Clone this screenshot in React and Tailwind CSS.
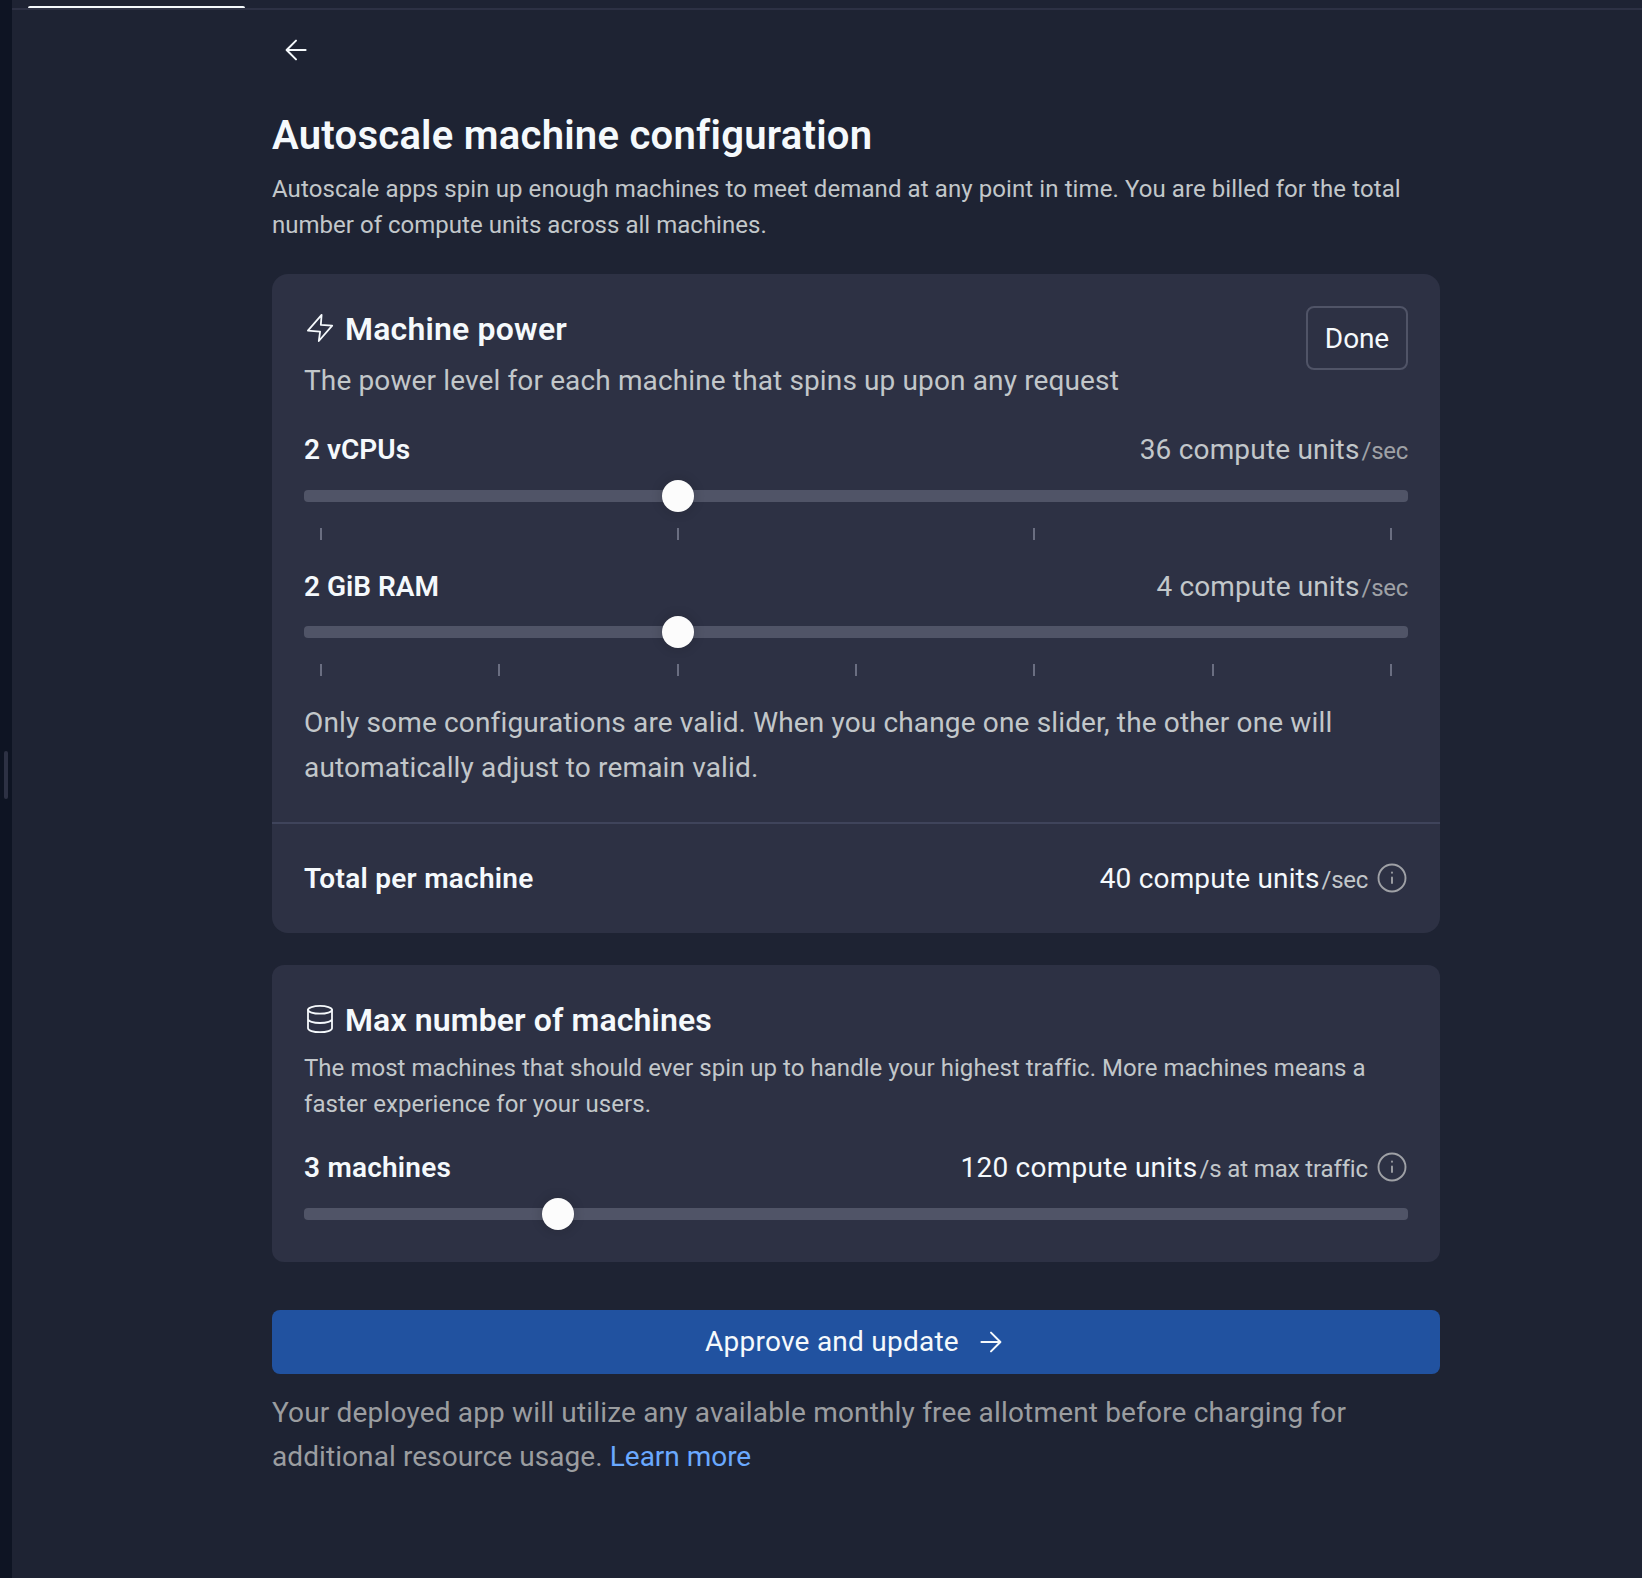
const Arrow = ({ className }) => (
  <svg viewBox="0 0 24 24" className={className} fill="none" stroke="currentColor" strokeWidth="2" strokeLinecap="round" strokeLinejoin="round">
    <path d="M2.4 12h18.6M12 2.6 21.4 12 12 21.4" />
  </svg>
);

const Bolt = () => (
  <svg viewBox="0 0 32 32" className="mb-0.5 size-8 shrink-0" fill="none" stroke="currentColor" strokeWidth="1.8" strokeLinejoin="round">
    <path d="M17.6 2.9 3.9 18.6l12.2 1L14.8 29 28.2 13.7l-11.4-.8z" />
  </svg>
);

const Database = () => (
  <svg viewBox="0 0 32 32" className="mb-0.5 size-8 shrink-0" fill="none" stroke="currentColor" strokeWidth="1.8" strokeLinecap="round">
    <ellipse cx="16" cy="6.8" rx="12" ry="3.9" />
    <path d="M4 6.8v18.4c0 2.2 5.4 4 12 4s12-1.8 12-4V6.8M4 16c0 2.2 5.4 4 12 4s12-1.8 12-4" />
  </svg>
);

const Info = () => (
  <svg viewBox="0 0 32 32" className="ml-2 size-8 shrink-0 text-[#9fa1a6]" fill="none" stroke="currentColor" strokeWidth="1.9" strokeLinecap="round">
    <circle cx="16" cy="16" r="13.5" />
    <path d="M16 15.4v5.6M16 10.5v.3" />
  </svg>
);

function Slider({ percent, ticks = 0 }) {
  return (
    <div>
      <div className="flex h-8 items-center">
        <div className="h-3 w-full rounded bg-[#505467] px-4">
          <div className="relative h-3">
            <div
              className="absolute -top-2.5 size-8 -translate-x-1/2 rounded-full bg-[#fcfcfc] shadow-[0_0_12px_rgba(20,20,20,0.2)]"
              style={{ left: `${percent}%` }}
            />
          </div>
        </div>
      </div>
      {ticks > 0 && (
        <div className="mt-4 flex justify-between px-4">
          {Array.from({ length: ticks }, (_, i) => (
            <div key={i} className="h-3 w-0.5 bg-[#6a6e81]" />
          ))}
        </div>
      )}
    </div>
  );
}

const Row = ({ label, labelClass = "", children }) => (
  <div className="flex h-11 items-center justify-between text-[28px] leading-[44px]">
    <span className={`pt-0.5 font-semibold ${labelClass}`}>{label}</span>
    <div className="flex items-center">{children}</div>
  </div>
);

export default function App() {
  return (
    <div className="flex h-[1578px] w-[1642px] overflow-hidden bg-[#1e2333] font-['Roboto','Liberation_Sans',sans-serif] text-[#f5f9fc]">
      <aside className="flex w-3 shrink-0 bg-[#0e1423]">
        <div className="mt-[751px] ml-1 h-12 w-1 rounded-full bg-[#2d3144]" />
      </aside>
      <div className="flex grow flex-col">
        <header className="flex h-2.5 shrink-0 items-end border-b-2 border-[#2d3144] pl-4">
          <div className="h-0.5 w-[217px] rounded-t-full bg-[#f5f9fc]" />
        </header>
        <main className="ml-[260px] w-[1168px] pt-4">
          <button className="flex size-12 items-center justify-center">
            <Arrow className="size-6 rotate-180" />
          </button>
          <h1 className="mt-[38px] text-[40px] leading-[48px] font-semibold tracking-[0.26px]">Autoscale machine configuration</h1>
          <p className="mt-[11px] text-2xl leading-9 tracking-[0.09px] text-[#c2c7ca]">
            Autoscale apps spin up enough machines to meet demand at any point in time. You are billed for the total
            <br />
            <span className="tracking-[0.02px]">number of compute units across all machines.</span>
          </p>

          <section className="mt-[31px] h-[659px] rounded-2xl bg-[#2d3144]">
            <div className="h-[550px] border-b-2 border-[#3f445b] px-8 pt-8">
              <div className="flex justify-between">
                <div className="pt-[3px]">
                  <h2 className="flex h-10 items-center gap-[9px] text-[32px] leading-10 font-semibold tracking-[0.19px]">
                    <Bolt />
                    Machine power
                  </h2>
                  <p className="mt-[10px] text-[28px] leading-[44px] tracking-[0.13px] text-[#c2c7ca]">
                    The power level for each machine that spins up upon any request
                  </p>
                </div>
                <button className="h-16 w-[102px] rounded-lg border-2 border-[#505467] pt-0.5 text-[28px] tracking-[-0.1px]">Done</button>
              </div>
              <div className="mt-[24px]">
                <Row label="2 vCPUs">
                  <span className="pt-0.5 tracking-[0.18px] text-[#c2c7ca]">36 compute units</span>
                  <span className="ml-0.5 pt-1 text-2xl leading-[44px] tracking-[-0.3px] text-[#9fa1a6]">/sec</span>
                </Row>
              </div>
              <div className="mt-[9px]">
                <Slider percent={33.4} ticks={4} />
              </div>
              <div className="mt-6">
                <Row label="2 GiB RAM">
                  <span className="pt-0.5 tracking-[0.12px] text-[#c2c7ca]">4 compute units</span>
                  <span className="ml-0.5 pt-1 text-2xl leading-[44px] tracking-[-0.3px] text-[#9fa1a6]">/sec</span>
                </Row>
              </div>
              <div className="mt-2">
                <Slider percent={33.4} ticks={7} />
              </div>
              <p className="mt-[25px] text-[28px] leading-[44.8px] tracking-[0.15px] text-[#c2c7ca]">
                Only some configurations are valid. When you change one slider, the other one will
                <br />
                automatically adjust to remain valid.
              </p>
            </div>
            <div className="px-8 pt-8">
              <Row label="Total per machine" labelClass="tracking-[0.27px]">
                <span className="pt-0.5 tracking-[0.18px]">40 compute units</span>
                <span className="ml-0.5 pt-1 text-2xl leading-[44px] tracking-[-0.3px] text-[#c2c7ca]">/sec</span>
                <Info />
              </Row>
            </div>
          </section>

          <section className="mt-8 h-[297px] rounded-xl bg-[#2d3144] px-8 pt-[35px]">
            <h2 className="flex h-10 items-center gap-[9px] text-[32px] leading-10 font-semibold tracking-[0.11px]">
              <Database />
              Max number of machines
            </h2>
            <p className="mt-2.5 text-2xl leading-9 tracking-[0.04px] text-[#c2c7ca]">
              The most machines that should ever spin up to handle your highest traffic. More machines means a
              <br />
              <span className="tracking-[0.1px]">faster experience for your users.</span>
            </p>
            <div className="mt-[23px]">
              <Row label="3 machines" labelClass="tracking-[0.21px]">
                <span className="pt-0.5 tracking-[0.25px]">120 compute units</span>
                <span className="ml-0.5 pt-1 text-2xl leading-[44px] tracking-[-0.13px] text-[#c2c7ca]">/s at max traffic</span>
                <Info />
              </Row>
            </div>
            <div className="mt-[9px]">
              <Slider percent={22.2} />
            </div>
          </section>

          <button className="mt-12 flex h-16 w-full items-center justify-center rounded-lg bg-[#2152a0] pr-1 text-[28px] tracking-[0.24px]">
            Approve and update
            <Arrow className="ml-5 size-6" />
          </button>
          <p className="mt-[17px] text-[28px] leading-[44px] tracking-[0.17px] text-[#9b9da0]">
            Your deployed app will utilize any available monthly free allotment before charging for
            <br />
            <span className="tracking-[0.08px]">additional resource usage. </span>
            <a className="tracking-[-0.03px] text-[#6aa9ff]">Learn more</a>
          </p>
        </main>
      </div>
    </div>
  );
}
